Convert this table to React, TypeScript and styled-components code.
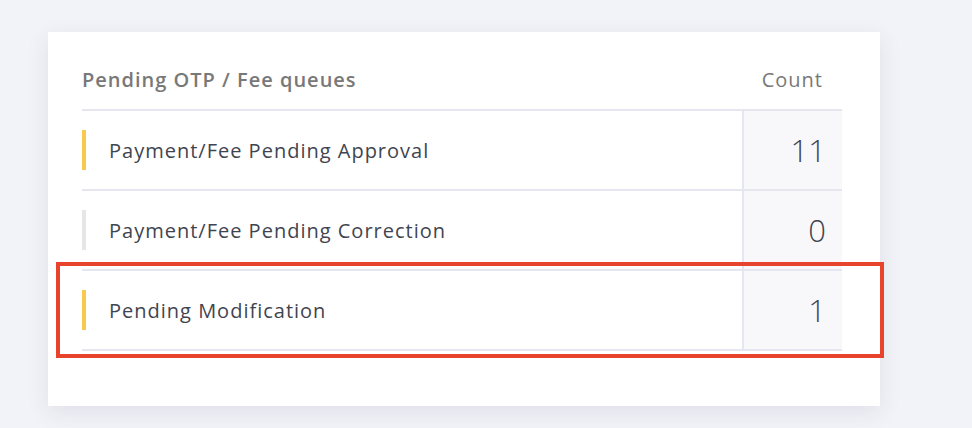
import styled, { createGlobalStyle } from "styled-components";

const GlobalStyle = createGlobalStyle`
  html, body {
    margin: 0;
    padding: 0;
    background: #f2f3f8;
    font-family: "Open Sans", "Noto Sans", sans-serif;
  }
`;

const Page = styled.div`
  padding: 32px 0 0 48px;
  height: 428px;
  box-sizing: border-box;
`;

const Card = styled.div`
  width: 832px;
  height: 374px;
  box-sizing: border-box;
  padding: 0 38px 0 34px;
  background: #fff;
  box-shadow: 0 6px 22px rgba(40, 44, 80, 0.09);
`;

const HeaderRow = styled.div`
  display: flex;
  align-items: flex-end;
  justify-content: space-between;
  height: 77px;
  box-sizing: border-box;
  padding: 0 19px 17px 0;
  font-size: 20px;
  line-height: 24px;
  color: #787878;
`;

const Title = styled.span`
  font-weight: 600;
  letter-spacing: 1px;
`;

const CountLabel = styled.span`
  font-weight: 400;
  letter-spacing: 1px;
`;

const Row = styled.div<{ $highlight?: boolean; $last?: boolean }>`
  position: relative;
  display: flex;
  height: ${(p) => (p.$last ? "82px" : "80px")};
  box-sizing: border-box;
  border-top: 2px solid #e6e6f0;
  border-bottom: ${(p) => (p.$last ? "2px solid #e6e6f0" : "none")};

  ${(p) =>
    p.$highlight &&
    `
    &::after {
      content: "";
      position: absolute;
      left: -26px;
      right: -42px;
      top: -9px;
      bottom: -9px;
      border: 4px solid #e8432d;
      pointer-events: none;
    }
  `}
`;

const Label = styled.div<{ $accent: string }>`
  flex: 1;
  display: flex;
  align-items: center;
  gap: 23px;
  font-size: 20px;
  letter-spacing: 1px;
  color: #3f4550;

  &::before {
    content: "";
    width: 4px;
    height: 40px;
    background: ${(p) => p.$accent};
  }
`;

const Count = styled.div`
  width: 100px;
  display: flex;
  align-items: center;
  justify-content: flex-end;
  padding-right: 16px;
  box-sizing: border-box;
  border-left: 2px solid #e6e6f0;
  background: #f8f8fb;
  font-size: 31px;
  font-weight: 300;
  color: #3f4550;
`;

const queues = [
  { name: "Payment/Fee Pending Approval", count: 11, accent: "#f7c94f" },
  { name: "Payment/Fee Pending Correction", count: 0, accent: "#e6e6e6" },
  { name: "Pending Modification", count: 1, accent: "#f7c94f" },
];

export default function App() {
  return (
    <Page>
      <GlobalStyle />
      <Card>
        <HeaderRow>
          <Title>Pending OTP / Fee queues</Title>
          <CountLabel>Count</CountLabel>
        </HeaderRow>
        {queues.map((q, i) => (
          <Row
            key={q.name}
            $highlight={i === queues.length - 1}
            $last={i === queues.length - 1}
          >
            <Label $accent={q.accent}>{q.name}</Label>
            <Count>{q.count}</Count>
          </Row>
        ))}
      </Card>
    </Page>
  );
}
